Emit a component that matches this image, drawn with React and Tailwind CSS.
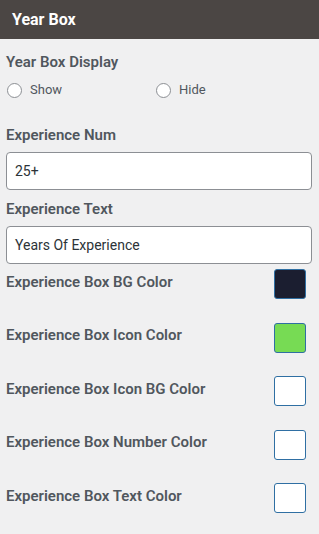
export default function App() {
  const colors = [
    { name: 'Experience Box BG Color', value: '#1b1e30' },
    { name: 'Experience Box Icon Color', value: '#77db54' },
    { name: 'Experience Box Icon BG Color', value: '#ffffff' },
    { name: 'Experience Box Number Color', value: '#ffffff' },
    { name: 'Experience Box Text Color', value: '#ffffff' },
  ];

  return (
    <div className="w-[319px] h-[534px] bg-[#f0f0f1] font-['Roboto',sans-serif] overflow-hidden">
      {/* Header */}
      <div className="h-[39px] bg-[#4b4644] flex items-center px-3">
        <span className="text-white text-[16px] font-bold">Year Box</span>
      </div>

      <div className="px-[6px]">
        <p className="mt-[13px] h-5 leading-5 text-[15px] font-semibold text-[#50575e]">Year Box Display</p>

        <div className="mt-[8px] h-5 flex items-center text-[13px] text-[#50575e]">
          <label className="flex items-center w-[149px]">
            <span className="w-[15px] h-[15px] rounded-full border border-[#8c8f94] bg-white ml-px" />
            <span className="ml-[8px]">Show</span>
          </label>
          <label className="flex items-center">
            <span className="w-[15px] h-[15px] rounded-full border border-[#8c8f94] bg-white ml-px" />
            <span className="ml-[8px]">Hide</span>
          </label>
        </div>

        <p className="mt-[25px] h-5 leading-5 text-[15px] font-semibold text-[#50575e]">Experience Num</p>
        <div className="mt-[7px] mr-px h-[38px] bg-white border border-[#8c8f94] rounded-[4px] flex items-center px-2 text-[14px] text-[#2c3338]">
          25+
        </div>

        <p className="mt-[9px] h-5 leading-5 text-[15px] font-semibold text-[#50575e]">Experience Text</p>
        <div className="mt-[7px] mr-px h-[38px] bg-white border border-[#8c8f94] rounded-[4px] flex items-center px-2 text-[14px] text-[#2c3338]">
          Years Of Experience
        </div>

        <div className="mt-[5px] flex flex-col gap-[23.5px]">
          {colors.map((c) => (
            <div key={c.name} className="flex items-center justify-between h-[30px] pr-[7px]">
              <span className="text-[15px] font-semibold text-[#50575e] mb-[4px]">{c.name}</span>
              <span
                className="w-[32px] h-[30px] rounded-[3px] border border-[#2f6fa3]"
                style={{ backgroundColor: c.value }}
              />
            </div>
          ))}
        </div>
      </div>
    </div>
  );
}
